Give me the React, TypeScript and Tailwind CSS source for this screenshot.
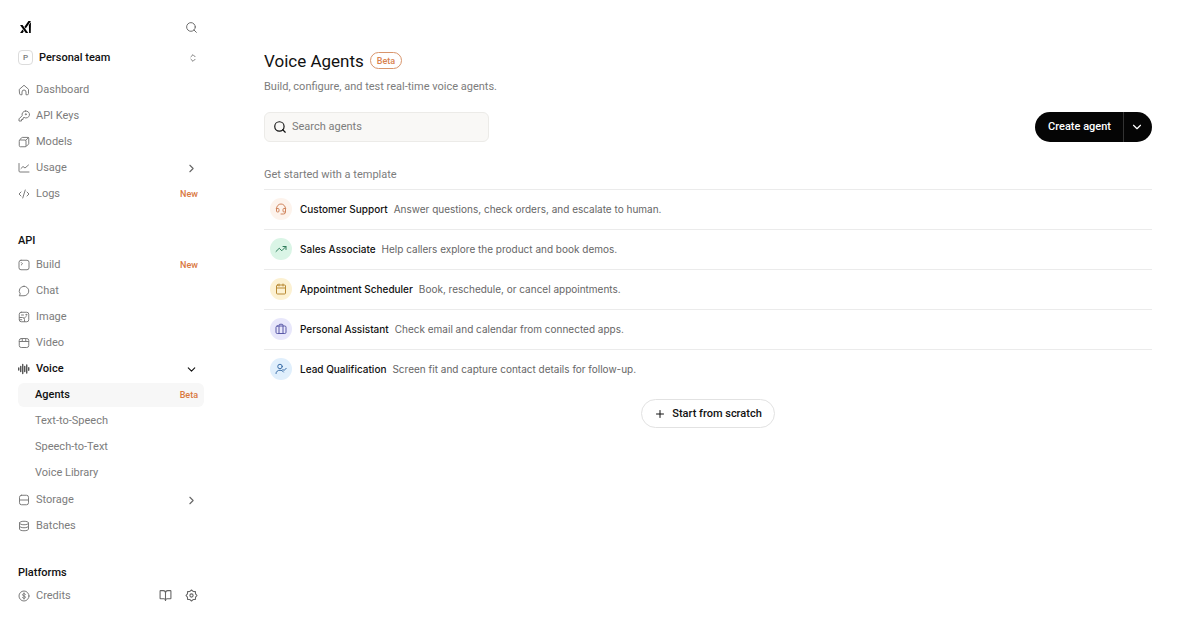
import React from "react";
import {
  BookOpen,
  Calendar,
  ChevronDown,
  ChevronRight,
  ChevronsUpDown,
  CodeXml,
  Headset,
  Plus,
  Search,
  TrendingUp,
} from "lucide-react";

type IconProps = { className?: string };

type NavItem = {
  label: string;
  icon: React.ComponentType<IconProps>;
  badge?: string;
  expandable?: boolean;
};

const Svg = ({ className, children }: { className?: string; children: React.ReactNode }) => (
  <svg
    viewBox="0 0 24 24"
    fill="none"
    stroke="currentColor"
    strokeWidth="2"
    strokeLinecap="round"
    strokeLinejoin="round"
    className={className}
    aria-hidden="true"
  >
    {children}
  </svg>
);

const HomeIcon = ({ className }: IconProps) => (
  <Svg className={className}>
    <path d="M3 10.5 12 2.5l9 8V19a2.5 2.5 0 0 1-2.5 2.5H16V16a4 4 0 0 0-8 0v5.5H5.5A2.5 2.5 0 0 1 3 19z" />
  </Svg>
);

const KeyIcon = ({ className }: IconProps) => (
  <Svg className={className}>
    <path d="M15 2a7 7 0 0 0-6.6 9.3L2 17.7V22h5v-3h3v-3l2.2-1.2A7 7 0 1 0 15 2z" />
    <circle cx="15.5" cy="8.5" r="1" />
  </Svg>
);

const ModelsIcon = ({ className }: IconProps) => (
  <Svg className={className}>
    <path d="M2.5 10a2 2 0 0 1 2-2H14a2 2 0 0 1 2 2v9.5a2 2 0 0 1-2 2H4.5a2 2 0 0 1-2-2z" />
    <path d="M3 8.5 7 3.5a2 2 0 0 1 1.5-.7H20a1.5 1.5 0 0 1 1.5 1.5v11.2a2 2 0 0 1-.6 1.4L15.5 21M15.5 8.5 21 3.3" />
  </Svg>
);

const UsageIcon = ({ className }: IconProps) => (
  <Svg className={className}>
    <path d="M2 3v15a2 2 0 0 0 2 2h18" />
    <path d="m6 13 4-4 4 3 7-6" />
  </Svg>
);

const BuildIcon = ({ className }: IconProps) => (
  <Svg className={className}>
    <rect x="2" y="2.5" width="20" height="19" rx="4" />
    <path d="m6.5 7 2.5 2.5L6.5 12" />
  </Svg>
);

const ChatIcon = ({ className }: IconProps) => (
  <Svg className={className}>
    <path d="M12 2.5a9.5 9.5 0 1 1 0 19H2.5l2-3.7A9.5 9.5 0 0 1 12 2.5z" />
  </Svg>
);

const ImageIcon = ({ className }: IconProps) => (
  <Svg className={className}>
    <rect x="2.5" y="2.5" width="19" height="19" rx="4" />
    <path d="M3 13h6a4 4 0 0 1 4 4v4M3 17.5h4.5M13 14l3-3M7 8h4" />
    <circle cx="16.5" cy="7.5" r="1" />
  </Svg>
);

const VideoIcon = ({ className }: IconProps) => (
  <Svg className={className}>
    <rect x="2.5" y="3" width="19" height="18" rx="4" />
    <path d="M2.5 9h19M8.5 3v6M15.5 3v6" />
  </Svg>
);

const VoiceIcon = ({ className }: IconProps) => (
  <Svg className={className}>
    <path strokeWidth="2.6" d="M1.5 10v4M5.5 7v10M9.5 3v18M13.5 7v10M17.5 4v16M21.5 9.5v5" />
  </Svg>
);

const StorageIcon = ({ className }: IconProps) => (
  <Svg className={className}>
    <rect x="3" y="2.5" width="18" height="19" rx="4" />
    <path d="M3 12h18" />
  </Svg>
);

const BatchesIcon = ({ className }: IconProps) => (
  <Svg className={className}>
    <path d="M3 6c0-2 3.5-3.5 9-3.5S21 4 21 6s-3.5 3.5-9 3.5S3 8 3 6zM3 6v12c0 2 3.5 3.5 9 3.5s9-1.5 9-3.5V6M3 12c0 2 3.5 3.5 9 3.5s9-1.5 9-3.5" />
  </Svg>
);

const CreditsIcon = ({ className }: IconProps) => (
  <Svg className={className}>
    <circle cx="12" cy="12" r="10" />
    <path d="M15 9c-.5-1.2-1.6-1.7-3-1.7-1.7 0-3 .8-3 2.3 0 3.2 6 1.6 6 4.8 0 1.5-1.3 2.3-3 2.3-1.5 0-2.6-.6-3-1.9M12 5.8v12.4" />
  </Svg>
);

const GearIcon = ({ className }: IconProps) => (
  <Svg className={className}>
    <path d="m12 1.8 3 2.7 4.2.3.3 4.2 2.7 3-2.7 3-.3 4.2-4.2.3-3 2.7-3-2.7-4.2-.3-.3-4.2-2.7-3 2.7-3 .3-4.2L9 4.5z" />
    <circle cx="12" cy="12" r="3" />
  </Svg>
);

const SuitcaseIcon = ({ className }: IconProps) => (
  <Svg className={className}>
    <rect x="2" y="6" width="20" height="15" rx="2.5" />
    <path d="M8 21V4.5A2 2 0 0 1 10 2.5h4a2 2 0 0 1 2 2V21" />
  </Svg>
);

const LeadIcon = ({ className }: IconProps) => (
  <Svg className={className}>
    <circle cx="10" cy="7" r="4.5" />
    <path d="M2 21c0-4 3.5-6.5 8-6.5 3 0 5.5 1 7 3.5M15.5 12.5l2.5 2.5 4.5-4.5" />
  </Svg>
);

const Logo = ({ className }: IconProps) => (
  <svg viewBox="201 56 440 483" fill="currentColor" className={className} role="img" aria-label="xAI">
    <path d="M557.1 212 565.4 538.4h66.6L640.3 93.2z" />
    <path d="M640.3 56.9H538.7L379.4 284.5l50.7 72.6z" />
    <path d="M201.6 538.4h101.6l50.8-72.6-50.8-72.5z" />
    <path d="m201.6 212 228.5 326.4h101.6L303.2 212z" />
  </svg>
);

const mainItems: NavItem[] = [
  { label: "Dashboard", icon: HomeIcon },
  { label: "API Keys", icon: KeyIcon },
  { label: "Models", icon: ModelsIcon },
  { label: "Usage", icon: UsageIcon, expandable: true },
  { label: "Logs", icon: CodeXml, badge: "New" },
];

const apiItems: NavItem[] = [
  { label: "Build", icon: BuildIcon, badge: "New" },
  { label: "Chat", icon: ChatIcon },
  { label: "Image", icon: ImageIcon },
  { label: "Video", icon: VideoIcon },
];

const voiceItems = ["Agents", "Text-to-Speech", "Speech-to-Text", "Voice Library"];

const dataItems: NavItem[] = [
  { label: "Storage", icon: StorageIcon, expandable: true },
  { label: "Batches", icon: BatchesIcon },
];

const templates = [
  {
    title: "Customer Support",
    desc: "Answer questions, check orders, and escalate to human.",
    icon: Headset,
    color: "bg-[#fdf3ec] text-[#d0845c]",
  },
  {
    title: "Sales Associate",
    desc: "Help callers explore the product and book demos.",
    icon: TrendingUp,
    color: "bg-[#daf5e6] text-[#2f7d5b]",
  },
  {
    title: "Appointment Scheduler",
    desc: "Book, reschedule, or cancel appointments.",
    icon: Calendar,
    color: "bg-[#fcf1d2] text-[#b98a34]",
  },
  {
    title: "Personal Assistant",
    desc: "Check email and calendar from connected apps.",
    icon: SuitcaseIcon,
    color: "bg-[#e8e7fb] text-[#5a59a8]",
  },
  {
    title: "Lead Qualification",
    desc: "Screen fit and capture contact details for follow-up.",
    icon: LeadIcon,
    color: "bg-[#e0effc] text-[#3a6ea8]",
  },
];

const NavLink = ({ item }: { item: NavItem }) => {
  const Icon = item.icon;
  return (
    <li>
      <a href="#" className="flex h-[26px] items-center gap-1.5 pr-1.5 text-[#7c7c7c]">
        <Icon className="size-3 shrink-0" />
        <span className="flex-1">{item.label}</span>
        {item.badge && <span className="text-[9px] font-medium text-[#d9783f]">{item.badge}</span>}
        {item.expandable && <ChevronRight className="size-[13px] text-[#666]" />}
      </a>
    </li>
  );
};

const Sidebar = () => (
  <aside className="w-[216px] shrink-0 pt-[15px] pr-3 pl-[18px]">
    <div className="flex h-6 items-center justify-between pr-1.5">
      <a href="#" className="pl-0.5">
        <Logo className="h-3 w-[11px]" />
      </a>
      <button aria-label="Search" className="text-[#666]">
        <Search className="size-[13px]" strokeWidth={1.75} />
      </button>
    </div>

    <button className="mt-1.5 flex h-[25px] w-full items-center gap-1.5 pr-1.5 font-medium text-[#111]">
      <span className="flex size-[15px] items-center justify-center rounded-sm border border-[#dcdcdc] text-[8px] text-[#777]">
        P
      </span>
      <span className="flex-1 text-left">Personal team</span>
      <ChevronsUpDown className="size-2.5 text-[#666]" />
    </button>

    <nav>
      <ul className="mt-[7px]">
        {mainItems.map((item) => (
          <NavLink key={item.label} item={item} />
        ))}
      </ul>

      <h2 className="mt-6 leading-5 font-medium text-[#111]">API</h2>
      <ul className="mt-px">
        {apiItems.map((item) => (
          <NavLink key={item.label} item={item} />
        ))}
        <li>
          <a href="#" className="flex h-[26px] items-center gap-1.5 pr-1.5 font-medium text-[#111]">
            <VoiceIcon className="size-3 shrink-0 text-[#444]" />
            <span className="flex-1">Voice</span>
            <ChevronDown className="size-[13px]" />
          </a>
          <ul className="mt-px flex flex-col gap-0.5">
            {voiceItems.map((label) => (
              <li key={label}>
                <a
                  href="#"
                  className={
                    label === "Agents"
                      ? "flex h-6 items-center justify-between rounded-md bg-[#f7f7f7] pr-1.5 pl-[17px] font-medium text-[#111]"
                      : "flex h-6 items-center pl-[17px] text-[#7c7c7c]"
                  }
                >
                  {label}
                  {label === "Agents" && <span className="text-[9px] text-[#d9783f]">Beta</span>}
                </a>
              </li>
            ))}
          </ul>
        </li>
      </ul>
      <ul className="mt-0.5">
        {dataItems.map((item) => (
          <NavLink key={item.label} item={item} />
        ))}
      </ul>

      <h2 className="mt-6 leading-5 font-medium text-[#111]">Platforms</h2>
      <div className="flex h-[25px] items-center gap-[13px] pr-1.5 text-[#7c7c7c]">
        <a href="#" className="flex flex-1 items-center gap-1.5">
          <CreditsIcon className="size-3" />
          Credits
        </a>
        <a href="#" aria-label="Documentation" className="text-[#666]">
          <BookOpen className="size-[13px]" />
        </a>
        <a href="#" aria-label="Settings" className="text-[#666]">
          <GearIcon className="size-[13px]" />
        </a>
      </div>
    </nav>
  </aside>
);

const App = () => {
  return (
    <div className="flex min-h-screen bg-white font-['Roboto','Inter',sans-serif] text-[11px] leading-4">
      <Sidebar />

      <main className="min-w-0 flex-1 px-12 pt-12">
        <div className="flex h-[25px] items-center gap-1.5">
          <h1 className="text-[17px] leading-6 text-[#111]">Voice Agents</h1>
          <span className="flex h-[17px] items-center rounded-full border border-[#d8956c] px-1.5 text-[9px] font-medium text-[#d9824f]">
            Beta
          </span>
        </div>
        <p className="mt-1.5 text-[#7c7c7c]">Build, configure, and test real-time voice agents.</p>

        <div className="mt-[17px] flex items-center justify-between">
          <label className="flex h-[30px] w-[225px] items-center gap-[5px] rounded-md border border-[#ecebe8] bg-[#f9f8f6] px-2">
            <Search className="size-3.5 text-[#111]" />
            <input
              type="text"
              aria-label="Search agents"
              placeholder="Search agents"
              className="min-w-0 flex-1 bg-transparent outline-none placeholder:text-[#7c7c7c]"
            />
          </label>
          <div className="flex h-[30px] overflow-hidden rounded-full bg-[#050505] font-medium text-white">
            <button className="pr-3 pl-[13px]">Create agent</button>
            <button aria-label="More create options" className="border-l border-[#333] pr-2 pl-1.5">
              <ChevronDown className="size-3.5" />
            </button>
          </div>
        </div>

        <h2 className="mt-6 h-[23px] leading-[18px] text-[#7c7c7c]">Get started with a template</h2>
        <ul className="font-['Inter',sans-serif] text-[10px]">
          {templates.map(({ title, desc, icon: Icon, color }) => (
            <li key={title} className="border-t border-[#ebebeb]">
              <a href="#" className="flex h-[39px] items-center pb-px pl-1.5">
                <span className={`flex size-[22px] items-center justify-center rounded-full ${color}`}>
                  <Icon className="size-3" />
                </span>
                <span className="ml-2 font-medium text-[#111]">{title}</span>
                <span className="ml-1.5 text-[#666]">{desc}</span>
              </a>
            </li>
          ))}
        </ul>

        <div className="mt-2.5 flex justify-center">
          <button className="flex h-[29px] items-center gap-1.5 rounded-full border border-[#e2e2e2] px-3 font-medium text-[#111]">
            <Plus className="size-3" />
            Start from scratch
          </button>
        </div>
      </main>
    </div>
  );
};

export default App;
